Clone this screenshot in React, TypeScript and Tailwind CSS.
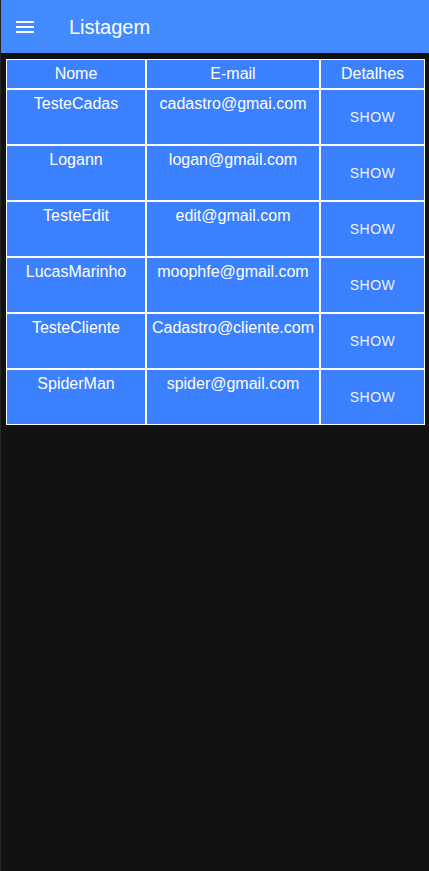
import React from 'react';

interface Cliente {
  nome: string;
  email: string;
}

const clientes: Cliente[] = [
  { nome: 'TesteCadas', email: 'cadastro@gmai.com' },
  { nome: 'Logann', email: 'logan@gmail.com' },
  { nome: 'TesteEdit', email: 'edit@gmail.com' },
  { nome: 'LucasMarinho', email: 'moophfe@gmail.com' },
  { nome: 'TesteCliente', email: 'Cadastro@cliente.com' },
  { nome: 'SpiderMan', email: 'spider@gmail.com' },
];

const MenuIcon = () => (
  <svg width="24" height="24" viewBox="0 0 24 24" fill="white">
    <path d="M3 18h18v-2H3v2zm0-5h18v-2H3v2zm0-7v2h18V6H3z" />
  </svg>
);

const App: React.FC = () => {
  return (
    <div
      className="min-h-[871px] bg-[#121212] border-l border-[#262626] text-white"
      style={{ fontFamily: '"Liberation Sans", Arial, sans-serif' }}
    >
      {/* app bar */}
      <header className="h-[53px] bg-[#448aff] flex items-center shadow-md">
        <div className="ml-[12px] mt-[1px] flex items-center">
          <MenuIcon />
        </div>
        <h1 className="ml-[32px] text-[20px] leading-none">Listagem</h1>
      </header>

      <div className="pl-[5px] pr-[4px] pt-[6px]">
        <table className="w-full border-separate border-spacing-0 table-fixed text-[16px]">
          <colgroup>
            <col className="w-[140px]" />
            <col className="w-[174px]" />
            <col />
          </colgroup>
          <thead>
            <tr className="h-[30px]">
              <th className="bg-[#3b80fe] border border-white font-normal text-center align-middle">Nome</th>
              <th className="bg-[#3b80fe] border border-white font-normal text-center align-middle">E-mail</th>
              <th className="bg-[#3b80fe] border border-white font-normal text-center align-middle">Detalhes</th>
            </tr>
          </thead>
          <tbody>
            {clientes.map((c, i) => (
              <tr key={i} className="h-[56px]">
                <td className="bg-[#3b80fe] border border-white text-center align-top pt-[2px] whitespace-nowrap">
                  {c.nome}
                </td>
                <td className="bg-[#3b80fe] border border-white text-center align-top pt-[2px] whitespace-nowrap">
                  {c.email}
                </td>
                <td className="bg-[#3b80fe] border border-white text-center align-middle">
                  <button className="px-2 py-[6px] text-[14px] uppercase tracking-[0.5px] text-[#eef3ff] leading-[24px]">
                    Show
                  </button>
                </td>
              </tr>
            ))}
          </tbody>
        </table>
      </div>
    </div>
  );
};

export default App;
